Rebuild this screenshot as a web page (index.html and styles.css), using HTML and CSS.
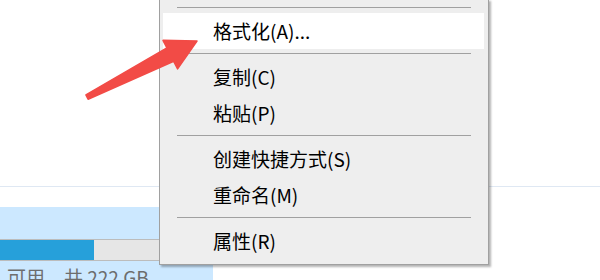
FILE: index.html
```html
<!DOCTYPE html>
<html>
<head>
	<meta charset="utf-8">
	<title>format drive</title>
	<link rel="stylesheet" href="styles.css">
</head>
<body>
<div class="screen">
	<div class="pane">
		<div class="rule"></div>
		<div class="drive">
			<div class="usage-bar">
				<div class="usage-fill" style="width: 95px"></div>
			</div>
			<div class="usage-text">可用，共 222 GB</div>
		</div>
	</div>
	<ul class="context-menu">
		<li class="menu-sep"></li>
		<li class="menu-item active">格式化(A)...</li>
		<li class="menu-sep"></li>
		<li class="menu-item">复制(C)</li>
		<li class="menu-item">粘贴(P)</li>
		<li class="menu-sep"></li>
		<li class="menu-item">创建快捷方式(S)</li>
		<li class="menu-item">重命名(M)</li>
		<li class="menu-sep"></li>
		<li class="menu-item">属性(R)</li>
	</ul>
	<svg class="arrow" viewBox="0 0 600 280" width="600" height="280">
		<polygon points="85.9,94.8 166.9,47.9 163,40.3 197,41 177.6,68.9 173.7,61.3 88.1,99.2" />
	</svg>
</div>
</body>
</html>
```

FILE: styles.css
```css
body {
	margin: 0;
	font-family: "Noto Sans CJK SC", sans-serif;
}
.screen {
	position: relative;
	width: 600px;
	height: 280px;
	overflow: hidden;
	background-color: #fff;
}
.pane {
	padding-top: 186px;
}
.rule {
	height: 1px;
	background-color: #dfe8f3;
}
.drive {
	box-sizing: border-box;
	margin-top: 20px;
	width: 213px;
	height: 80px;
	padding-top: 32px;
	background-color: #cce8ff;
}
.usage-bar {
	box-sizing: border-box;
	margin-left: -2px;
	width: 200px;
	height: 22px;
	border: 1px solid #bcbcbc;
	background-color: #e6e6e6;
}
.usage-fill {
	height: 100%;
	background-color: #26a0da;
}
.usage-text {
	margin-top: 4px;
	padding-left: 7px;
	font-size: 19px;
	line-height: 24px;
	color: #6d6d6d;
	white-space: nowrap;
}
.context-menu {
	position: absolute;
	left: 159px;
	top: -1px;
	box-sizing: border-box;
	width: 330px;
	margin: 0;
	padding: 3px 4px 5px 3px;
	list-style: none;
	border: 1px solid #a0a0a0;
	background-color: #eeeeee;
	box-shadow: 2px 2px 2px rgba(0, 0, 0, 0.3);
}
.menu-sep {
	height: 1px;
	margin: 4px 13px 5px 14px;
	background-color: #a0a0a0;
}
.menu-item {
	height: 36px;
	line-height: 36px;
	padding-left: 50px;
	font-size: 19px;
	color: #000;
	white-space: nowrap;
}
.menu-item.active {
	background-color: #fff;
}
.arrow {
	position: absolute;
	left: 0;
	top: 0;
	pointer-events: none;
}
.arrow polygon {
	fill: #f24b46;
	stroke: #f24b46;
	stroke-width: 1.5;
	stroke-linejoin: round;
}
```
